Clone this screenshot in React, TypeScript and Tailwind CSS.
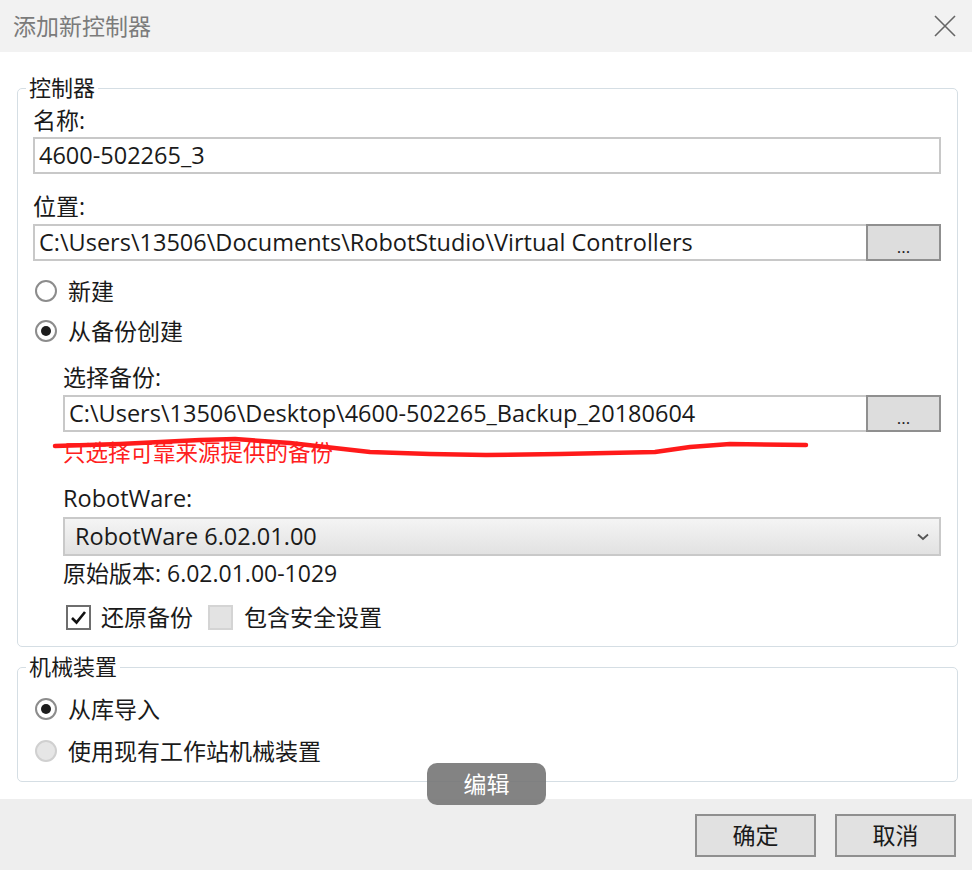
import React from 'react';

const font = "font-['Open_Sans','Noto_Sans_CJK_SC',sans-serif]";

const Radio = ({ label, checked = false, disabled = false }: { label: string; checked?: boolean; disabled?: boolean }) => (
  <div className="flex items-center h-[30px]">
    <span
      className={`ml-[2px] w-[22px] h-[22px] rounded-full border-2 flex items-center justify-center ${
        disabled ? 'border-[#d0d0d0] bg-[#e6e6e6]' : 'border-[#8c8c8c] bg-white'
      }`}
    >
      {checked && <span className="w-[10px] h-[10px] rounded-full bg-[#1c1c1c]" />}
    </span>
    <span className="ml-[11px]">{label}</span>
  </div>
);

const Check = ({ checked = false, disabled = false }: { checked?: boolean; disabled?: boolean }) => (
  <span
    className={`w-[25px] h-[25px] border-2 flex items-center justify-center ${
      disabled ? 'border-[#d4d4d4] bg-[#e3e3e3]' : 'border-[#6e6e6e] bg-white'
    }`}
  >
    {checked && (
      <svg width="17" height="15" viewBox="0 0 17 15">
        <path d="M2 8 L6.5 12.5 L15 2" fill="none" stroke="#111" strokeWidth="2.6" />
      </svg>
    )}
  </span>
);

const PathInput = ({ value }: { value: string }) => (
  <div className="flex h-[37px]">
    <div className="flex-1 flex items-center border-2 border-r-0 border-[#c8c8c8] bg-white pl-[4px] overflow-hidden whitespace-nowrap text-[23.5px]">
      {value}
    </div>
    <button className="w-[75px] border-2 border-[#8f8f8f] bg-[#dddddd] flex items-end justify-center pb-[4px] text-[17px] leading-none">
      ...
    </button>
  </div>
);

export default function App() {
  return (
    <div className={`w-[972px] h-[870px] bg-white flex flex-col text-[23px] text-[#1a1a1a] relative ${font}`}>
      {/* title bar */}
      <div className="h-[52px] bg-[#f2f2f2] flex items-center justify-between pl-[13px] pr-[16px]">
        <span className="text-[#7b7b7b] text-[23px]">添加新控制器</span>
        <svg width="22" height="22" viewBox="0 0 22 22">
          <path d="M1 1 L21 21 M21 1 L1 21" stroke="#666" strokeWidth="1.6" />
        </svg>
      </div>

      <div className="flex-1 flex flex-col pl-[17px] pr-[14px] pt-[22px]">
        <fieldset className="border border-[#d5dee4] rounded-[5px] pl-[15px] pr-[16px] pb-[15px]">
          <legend className="-ml-[7px] px-[3px] h-[28px] leading-[26px] text-[22px]">控制器</legend>
          <div className="mt-[4px] h-[28px] leading-[28px]">名称:</div>
          <div className="mt-[3px] h-[37px] border-2 border-[#c8c8c8] flex items-center pl-[4px] text-[23.5px]">4600-502265_3</div>
          <div className="mt-[18px] h-[28px] leading-[28px]">位置:</div>
          <div className="mt-[4px]">
            <PathInput value="C:\Users\13506\Documents\RobotStudio\Virtual Controllers" />
          </div>
          <div className="mt-[15px]">
            <Radio label="新建" />
          </div>
          <div className="mt-[10px]">
            <Radio label="从备份创建" checked />
          </div>
          <div className="pl-[30px]">
            <div className="mt-[17px] h-[28px] leading-[28px]">选择备份:</div>
            <div className="mt-[4px]">
              <PathInput value="C:\Users\13506\Desktop\4600-502265_Backup_20180604" />
            </div>
            <div className="mt-[7px] h-[28px] leading-[28px] text-[22.5px] text-[#ff2020]">只选择可靠来源提供的备份</div>
            <div className="mt-[17px] h-[28px] leading-[28px] text-[23.5px]">RobotWare:</div>
            <div className="mt-[5px] h-[39px] border-2 border-[#c9c9c9] bg-gradient-to-b from-[#f4f4f4] to-[#e2e2e2] flex items-center justify-between pl-[10px] pr-[10px]">
              <span className="text-[23.5px]">RobotWare 6.02.01.00</span>
              <svg width="12" height="8" viewBox="0 0 12 8">
                <path d="M1 1.5 L6 6 L11 1.5" fill="none" stroke="#555" strokeWidth="1.8" />
              </svg>
            </div>
            <div className="mt-[3px] h-[28px] leading-[28px]">原始版本: 6.02.01.00-1029</div>
            <div className="mt-[16px] h-[28px] flex items-center">
              <span className="ml-[3px]">
                <Check checked />
              </span>
              <span className="ml-[10px]">还原备份</span>
              <span className="ml-[15px]">
                <Check disabled />
              </span>
              <span className="ml-[11px]">包含安全设置</span>
            </div>
          </div>
        </fieldset>

        <fieldset className="mt-[6px] border border-[#d5dee4] rounded-[5px] pl-[15px] pr-[16px] pb-[15px]">
          <legend className="-ml-[7px] px-[3px] h-[28px] leading-[26px] text-[22px]">机械装置</legend>
          <div className="mt-[13px]">
            <Radio label="从库导入" checked />
          </div>
          <div className="mt-[12px]">
            <Radio label="使用现有工作站机械装置" disabled />
          </div>
        </fieldset>
      </div>

      {/* footer */}
      <div className="h-[71px] bg-[#eeeeee] flex items-start justify-end gap-[19px] pt-[15px] pr-[16px]">
        <button className="w-[121px] h-[43px] border-2 border-[#8f8f8f] bg-[#e1e1e1]">确定</button>
        <button className="w-[121px] h-[43px] border-2 border-[#8f8f8f] bg-[#e1e1e1]">取消</button>
      </div>

      {/* hand-drawn red underline */}
      <svg className="absolute left-0 top-0 pointer-events-none" width="972" height="870">
        <path
          d="M55 446 L120 444 L200 440 L235 439 L290 443 L370 452 L430 454 L486 455 L560 454 L655 452 L690 447 L730 444 L806 445"
          fill="none"
          stroke="#ff1a1a"
          strokeWidth="4.5"
          strokeLinecap="round"
          strokeLinejoin="round"
        />
      </svg>

      {/* tooltip */}
      <div className="absolute left-[427px] top-[763px] w-[119px] h-[42px] rounded-[10px] bg-[#767676]/90 text-white flex items-center justify-center text-[23px]">
        编辑
      </div>
    </div>
  );
}
